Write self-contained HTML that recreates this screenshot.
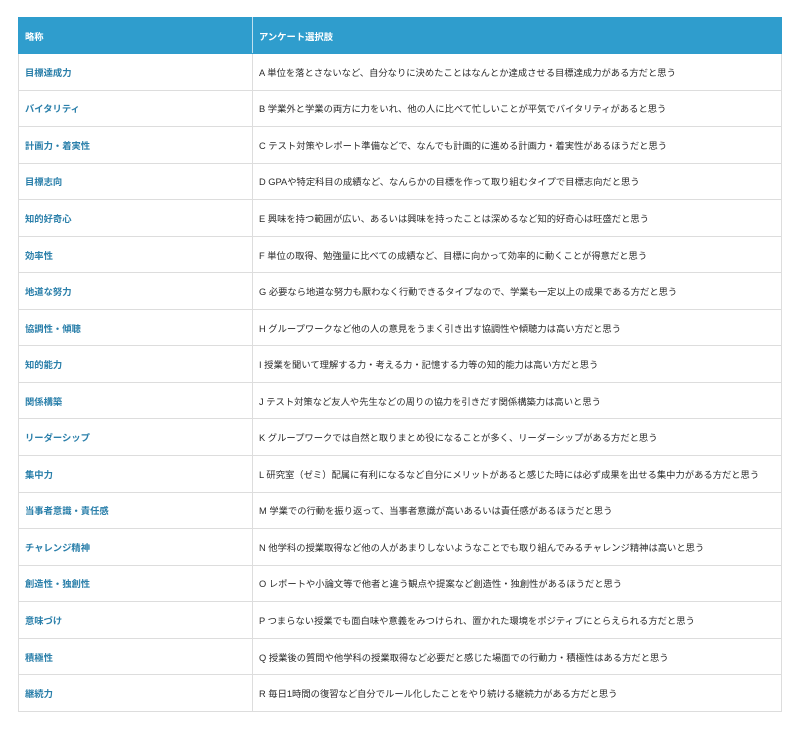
<!DOCTYPE html>
<html><head><meta charset="utf-8"><style>
body{margin:0;background:#fff;font-family:"Liberation Sans","Noto Sans CJK JP",sans-serif;}
table{position:absolute;left:18px;top:17px;width:764px;border-collapse:collapse;font-size:9.3px;table-layout:fixed}
th{background:#2f9dcd;color:#fff;text-align:left;height:35px;padding:0 0 0 6px;font-weight:bold;border:1px solid #2f9dcd;border-right:1px solid #bfe0ef}
th:last-child{border-right:1px solid #2f9dcd}
td{height:35.55px;padding:0 0 0 6px;border:1px solid #ddd;color:#2a2a2a;white-space:nowrap;overflow:hidden}
td:first-child{color:#2a7faa;font-weight:bold}
</style></head><body>
<table>
<colgroup><col style="width:234px"><col></colgroup>
<tr><th>略称</th><th>アンケート選択肢</th></tr>
<tr><td>目標達成力</td><td>A 単位を落とさないなど、自分なりに決めたことはなんとか達成させる目標達成力がある方だと思う</td></tr>
<tr><td>バイタリティ</td><td>B 学業外と学業の両方に力をいれ、他の人に比べて忙しいことが平気でバイタリティがあると思う</td></tr>
<tr><td>計画力・着実性</td><td>C テスト対策やレポート準備などで、なんでも計画的に進める計画力・着実性があるほうだと思う</td></tr>
<tr><td>目標志向</td><td>D GPAや特定科目の成績など、なんらかの目標を作って取り組むタイプで目標志向だと思う</td></tr>
<tr><td>知的好奇心</td><td>E 興味を持つ範囲が広い、あるいは興味を持ったことは深めるなど知的好奇心は旺盛だと思う</td></tr>
<tr><td>効率性</td><td>F 単位の取得、勉強量に比べての成績など、目標に向かって効率的に動くことが得意だと思う</td></tr>
<tr><td>地道な努力</td><td>G 必要なら地道な努力も厭わなく行動できるタイプなので、学業も一定以上の成果である方だと思う</td></tr>
<tr><td>協調性・傾聴</td><td>H グループワークなど他の人の意見をうまく引き出す協調性や傾聴力は高い方だと思う</td></tr>
<tr><td>知的能力</td><td>I 授業を聞いて理解する力・考える力・記憶する力等の知的能力は高い方だと思う</td></tr>
<tr><td>関係構築</td><td>J テスト対策など友人や先生などの周りの協力を引きだす関係構築力は高いと思う</td></tr>
<tr><td>リーダーシップ</td><td>K グループワークでは自然と取りまとめ役になることが多く、リーダーシップがある方だと思う</td></tr>
<tr><td>集中力</td><td>L 研究室（ゼミ）配属に有利になるなど自分にメリットがあると感じた時には必ず成果を出せる集中力がある方だと思う</td></tr>
<tr><td>当事者意識・責任感</td><td>M 学業での行動を振り返って、当事者意識が高いあるいは責任感があるほうだと思う</td></tr>
<tr><td>チャレンジ精神</td><td>N 他学科の授業取得など他の人があまりしないようなことでも取り組んでみるチャレンジ精神は高いと思う</td></tr>
<tr><td>創造性・独創性</td><td>O レポートや小論文等で他者と違う観点や提案など創造性・独創性があるほうだと思う</td></tr>
<tr><td>意味づけ</td><td>P つまらない授業でも面白味や意義をみつけられ、置かれた環境をポジティブにとらえられる方だと思う</td></tr>
<tr><td>積極性</td><td>Q 授業後の質問や他学科の授業取得など必要だと感じた場面での行動力・積極性はある方だと思う</td></tr>
<tr><td>継続力</td><td>R 毎日1時間の復習など自分でルール化したことをやり続ける継続力がある方だと思う</td></tr>
</table>
</body></html>
